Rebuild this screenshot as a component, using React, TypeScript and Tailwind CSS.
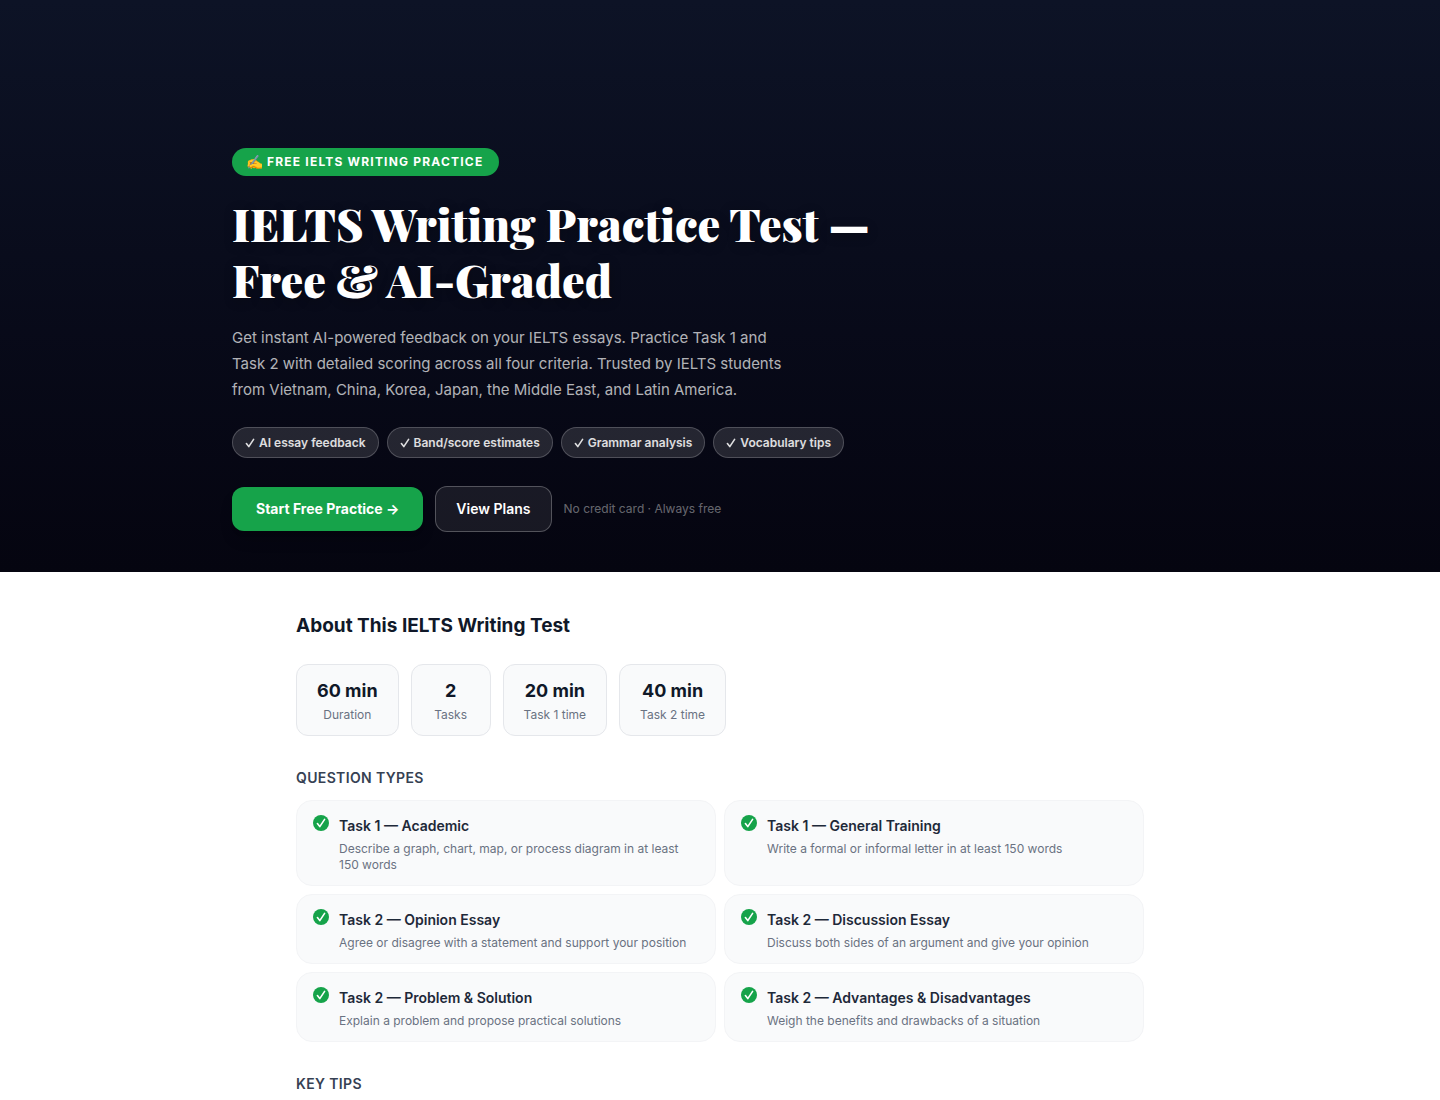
const features = ["AI essay feedback", "Band/score estimates", "Grammar analysis", "Vocabulary tips"];

const stats = [
  { value: "60 min", label: "Duration" },
  { value: "2", label: "Tasks" },
  { value: "20 min", label: "Task 1 time" },
  { value: "40 min", label: "Task 2 time" },
];

const questionTypes = [
  { title: "Task 1 — Academic", desc: "Describe a graph, chart, map, or process diagram in at least 150 words" },
  { title: "Task 1 — General Training", desc: "Write a formal or informal letter in at least 150 words" },
  { title: "Task 2 — Opinion Essay", desc: "Agree or disagree with a statement and support your position" },
  { title: "Task 2 — Discussion Essay", desc: "Discuss both sides of an argument and give your opinion" },
  { title: "Task 2 — Problem & Solution", desc: "Explain a problem and propose practical solutions" },
  { title: "Task 2 — Advantages & Disadvantages", desc: "Weigh the benefits and drawbacks of a situation" },
];

function Check({ className }: { className: string }) {
  return (
    <svg viewBox="0 0 10 10" fill="none" stroke="currentColor" strokeLinecap="round" strokeLinejoin="round" className={className} aria-hidden="true">
      <path d="M1.4 5.6 3.8 8.6 8.6 1.4" strokeWidth="1.6" />
    </svg>
  );
}

function SectionLabel({ children }: { children: string }) {
  return <h3 className="mt-8 text-sm font-semibold tracking-wide text-gray-700 uppercase">{children}</h3>;
}

export default function App() {
  return (
    <main className="min-h-screen bg-white font-['Inter',sans-serif]">
      <section className="bg-linear-to-b from-[#0d1326] to-[#050510] px-6 pt-[148px] pb-10">
        <div className="mx-auto max-w-[976px]">
          <div className="flex">
            <span className="flex h-7 items-center gap-1 rounded-full bg-[#16a34a] pr-4 pl-3.5 text-xs font-bold tracking-widest text-white uppercase">
              <span className="text-sm tracking-normal">✍️</span>
              Free IELTS Writing Practice
            </span>
          </div>
          <h1 className="mt-[19px] max-w-[700px] font-['Playfair_Display','DejaVu_Serif',serif] text-[45px] leading-[56px] font-black text-white [text-shadow:0_2px_12px_rgba(0,0,0,0.3)]">
            IELTS Writing Practice Test — Free &amp; AI-Graded
          </h1>
          <p className="mt-[18px] max-w-[560px] text-[15px] leading-[26px] text-white/70">
            Get instant AI-powered feedback on your IELTS essays. Practice Task 1 and Task 2 with detailed scoring across all
            four criteria. Trusted by IELTS students from Vietnam, China, Korea, Japan, the Middle East, and Latin America.
          </p>
          <ul className="mt-6 flex flex-wrap gap-2">
            {features.map((f) => (
              <li
                key={f}
                className="flex items-center gap-1 rounded-full border border-white/20 bg-white/12 px-3 py-1.5 text-xs leading-[17px] font-semibold text-white/85"
              >
                <Check className="size-2.5" />
                {f}
              </li>
            ))}
          </ul>
          <div className="mt-7 flex flex-wrap items-center gap-3">
            <a href="#practice" className="rounded-xl bg-[#16a34a] px-6 py-3 text-sm font-bold text-white shadow-lg shadow-black/20">
              Start Free Practice →
            </a>
            <a href="#plans" className="rounded-xl border border-white/25 bg-white/8 px-5 py-3 text-sm font-semibold text-white">
              View Plans
            </a>
            <span className="text-xs text-white/40">No credit card · Always free</span>
          </div>
        </div>
      </section>

      <section className="mx-auto max-w-[896px] px-6 py-10">
        <h2 className="text-[19px] leading-7 font-bold text-gray-900">About This IELTS Writing Test</h2>
        <div className="mt-6 flex flex-wrap gap-3">
          {stats.map((s) => (
            <div key={s.label} className="min-w-20 rounded-xl border border-gray-200 bg-gray-50 px-5 py-3 text-center">
              <p className="text-lg font-bold text-gray-900">{s.value}</p>
              <p className="mt-0.5 text-xs text-gray-500">{s.label}</p>
            </div>
          ))}
        </div>

        <SectionLabel>Question Types</SectionLabel>
        <ul className="mt-3 grid gap-2 sm:grid-cols-2">
          {questionTypes.map((q) => (
            <li key={q.title} className="flex items-start gap-2.5 rounded-2xl border border-gray-100 bg-gray-50 px-4 pt-3.5 pb-3">
              <span className="flex size-4 shrink-0 items-center justify-center rounded-full bg-[#16a34a] text-white">
                <Check className="size-2.5" />
              </span>
              <div>
                <p className="text-sm leading-[22px] font-semibold text-gray-800">{q.title}</p>
                <p className="mt-1 text-xs text-gray-500">{q.desc}</p>
              </div>
            </li>
          ))}
        </ul>

        <SectionLabel>Key Tips</SectionLabel>
      </section>
    </main>
  );
}
